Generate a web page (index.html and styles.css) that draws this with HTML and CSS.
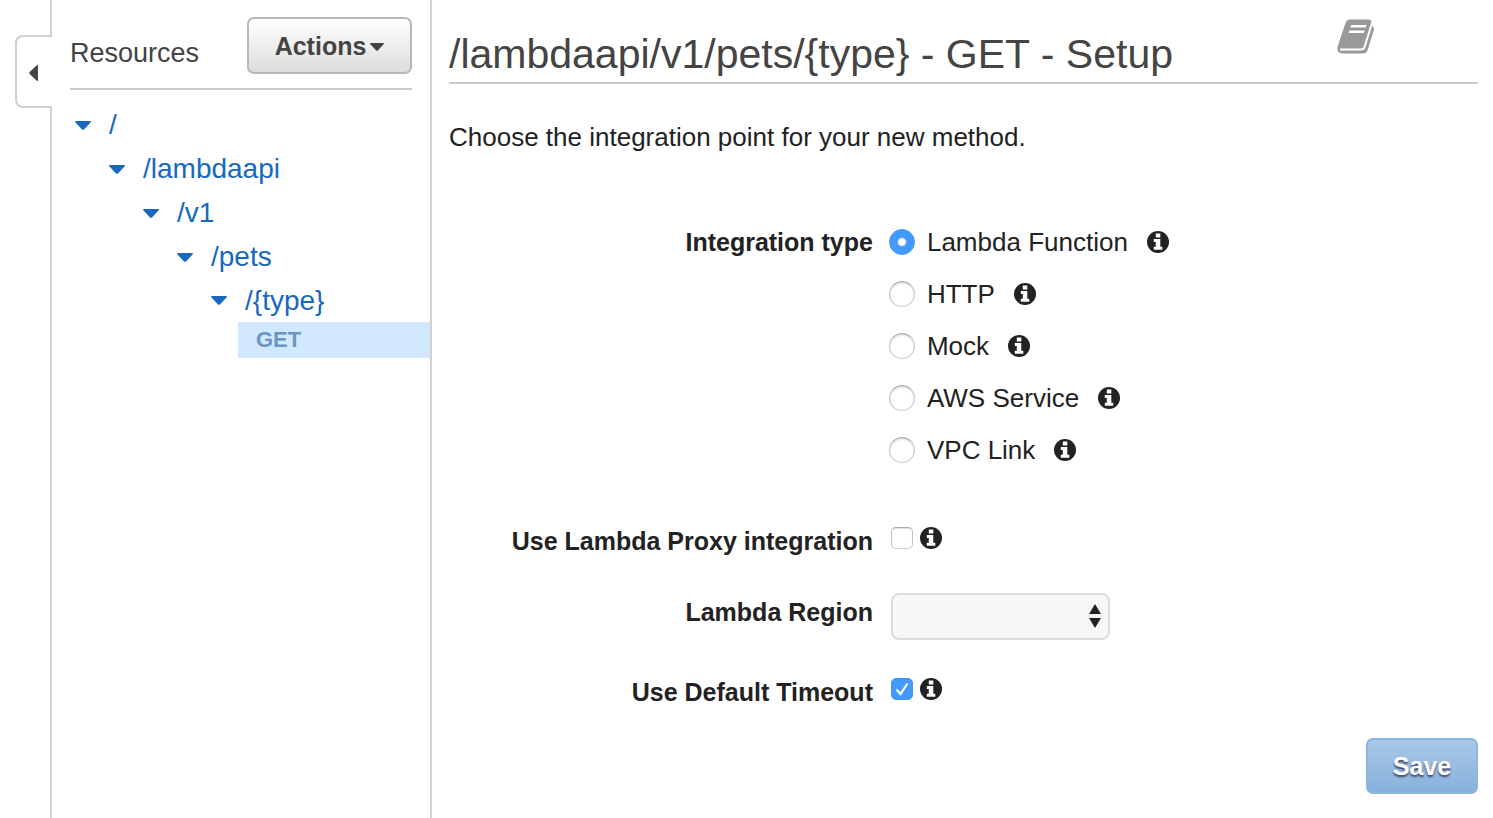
FILE: index.html
```html
<!DOCTYPE html>
<html lang="en">
<head>
<meta charset="utf-8">
<title>API Gateway - Method Setup</title>
<link rel="stylesheet" href="styles.css">
</head>
<body>
<svg class="sprite" aria-hidden="true">
  <symbol id="info" viewBox="0 0 22 22">
    <circle cx="11" cy="11" r="11" fill="#222"/>
    <path fill="#fff" d="M8.800 2.500h4.500v4H8.800zM6.800 8h6.500v7.800h2v3H6.800v-3h2V11h-2z"/>
  </symbol>
  <symbol id="caret" viewBox="0 0 16 9">
    <path fill="currentColor" d="M.5 0h15q.6.600 0 1.400L9 8.400q-1 .8-2 0L.5 1.400Q0 .6.500 0z"/>
  </symbol>
</svg>
<div class="app">
  <aside class="sidebar">
    <button class="handle" type="button" aria-label="Collapse resources">
      <svg class="handle-icon" viewBox="0 0 9 16"><path fill="#444" d="M9 0v16q-1 0-2-1L.6 9Q0 8 .6 7L7 1q1-1 2-1z"/></svg>
    </button>
    <header class="sidebar-head">
      <h2 class="sidebar-title">Resources</h2>
      <button class="actions" type="button">Actions<svg class="actions-caret" aria-hidden="true"><use href="#caret"/></svg></button>
    </header>
    <nav class="tree">
      <div class="node"><svg class="caret" aria-hidden="true"><use href="#caret"/></svg><a href="#root">/</a></div>
      <div class="branch">
        <div class="node"><svg class="caret" aria-hidden="true"><use href="#caret"/></svg><a href="#lambdaapi">/lambdaapi</a></div>
        <div class="branch">
          <div class="node"><svg class="caret" aria-hidden="true"><use href="#caret"/></svg><a href="#v1">/v1</a></div>
          <div class="branch">
            <div class="node"><svg class="caret" aria-hidden="true"><use href="#caret"/></svg><a href="#pets">/pets</a></div>
            <div class="branch">
              <div class="node"><svg class="caret" aria-hidden="true"><use href="#caret"/></svg><a href="#type">/{type}</a></div>
              <a class="method" href="#get">GET</a>
            </div>
          </div>
        </div>
      </div>
    </nav>
  </aside>
  <main class="main">
    <header class="main-head">
      <h1 class="title">/lambdaapi/v1/pets/{type} - GET - Setup</h1>
      <a class="docs" href="#docs" aria-label="Documentation">
        <svg class="docs-icon" viewBox="0 0 38 36">
          <path fill="#999" d="M13 .5h18q4 0 3.200 3.500v2.500q3.500 1 2.600 4.500L31 30q-1.200 4.500-5 4.500H6Q-.5 34.500.5 28L8.500 4Q9.500.5 13 .5z"/>
          <path fill="none" stroke="#fff" stroke-width="2" d="M3 30.500h21q2.800 0 3.600-2.800L35 4"/>
          <path fill="#fff" d="M14.200 6h15.300l-.8 2.500H13.400zM12.400 11.500h15.300l-.8 2.500H11.600z"/>
        </svg>
      </a>
    </header>
    <p class="intro">Choose the integration point for your new method.</p>
    <form class="form">
      <span class="label" id="type-label">Integration type</span>
      <div class="options" role="radiogroup" aria-labelledby="type-label">
        <div class="option"><label class="choice"><input class="radio" type="radio" name="type" checked>Lambda Function</label><svg class="info" aria-hidden="true"><use href="#info"/></svg></div>
        <div class="option"><label class="choice"><input class="radio" type="radio" name="type">HTTP</label><svg class="info" aria-hidden="true"><use href="#info"/></svg></div>
        <div class="option"><label class="choice"><input class="radio" type="radio" name="type">Mock</label><svg class="info" aria-hidden="true"><use href="#info"/></svg></div>
        <div class="option"><label class="choice"><input class="radio" type="radio" name="type">AWS Service</label><svg class="info" aria-hidden="true"><use href="#info"/></svg></div>
        <div class="option"><label class="choice"><input class="radio" type="radio" name="type">VPC Link</label><svg class="info" aria-hidden="true"><use href="#info"/></svg></div>
      </div>
      <label class="label" for="proxy">Use Lambda Proxy integration</label>
      <div class="check-row"><input class="check" type="checkbox" id="proxy"><svg class="info" aria-hidden="true"><use href="#info"/></svg></div>
      <label class="label label-select" for="region">Lambda Region</label>
      <div class="select-wrap">
        <select class="select" id="region"><option></option></select>
        <svg class="select-arrows" viewBox="0 0 12 24" aria-hidden="true"><path fill="#222" d="M6 0l6 10H0zM6 24l6-10H0z"/></svg>
      </div>
      <label class="label" for="timeout">Use Default Timeout</label>
      <div class="check-row"><input class="check" type="checkbox" id="timeout" checked><svg class="info" aria-hidden="true"><use href="#info"/></svg></div>
    </form>
    <footer class="footer"><button class="save" type="button">Save</button></footer>
  </main>
</div>
</body>
</html>
```
FILE: styles.css
```css
* {
  box-sizing: border-box;
}

body {
  margin: 0;
  background: #fff;
  color: #222;
  font-family: "Liberation Sans", Arial, sans-serif;
  font-size: 26px;
  line-height: 32px;
}

button,
select {
  font-family: inherit;
}

a {
  color: #1768bf;
  text-decoration: none;
}

.sprite {
  position: absolute;
  width: 0;
  height: 0;
}

.app {
  display: flex;
  min-height: 100vh;
  padding-left: 50px;
}

.sidebar {
  position: relative;
  flex: 0 0 382px;
  border: solid #d0d0d0;
  border-width: 0 2px;
}

/* Tab on the sidebar's outer edge; covers the border to open into the panel */
.handle {
  position: absolute;
  top: 35px;
  left: -37px;
  display: flex;
  align-items: center;
  width: 37px;
  height: 73px;
  padding: 2px 0 0 12px;
  border: 2px solid #d0d0d0;
  border-right: 0;
  border-radius: 8px 0 0 8px;
  background: #fff;
}

.handle-icon {
  width: 9px;
  height: 16px;
}

.sidebar-head {
  display: flex;
  justify-content: space-between;
  margin: 0 18px;
  padding: 17px 0 14px;
  border-bottom: 2px solid #ccc;
}

.sidebar-title {
  margin: 0;
  padding-top: 20px;
  color: #444;
  font-size: 27px;
  font-weight: normal;
}

.actions {
  display: flex;
  align-items: center;
  justify-content: center;
  gap: 4px;
  width: 165px;
  height: 57px;
  padding: 2px 0 0;
  border: 2px solid #b8b8b8;
  border-radius: 7px;
  background: linear-gradient(#fff, #ddd);
  color: #444;
  font-size: 25px;
  font-weight: bold;
}

.actions-caret {
  width: 14px;
  height: 8px;
}

.tree {
  padding: 13px 0 0 23px;
  font-size: 28px;
}

.branch {
  padding-left: 34px;
}

.node {
  display: flex;
  align-items: center;
  gap: 18px;
  height: 44px;
  color: #1768bf;
}

.node:last-of-type {
  height: 43px;
}

.caret {
  width: 16px;
  height: 9px;
}

.method {
  display: block;
  margin-left: 27px;
  padding-left: 18px;
  background: #d1e8ff;
  color: #6996c3;
  font-size: 22px;
  font-weight: bold;
  line-height: 36px;
}

.main {
  flex: 1;
  padding: 0 15px 24px 17px;
}

.main-head {
  display: flex;
  align-items: flex-start;
  justify-content: space-between;
  height: 84px;
  padding: 19px 103px 0 0;
  border-bottom: 2px solid #ccc;
}

.title {
  margin: 0;
  padding-top: 11px;
  color: #444;
  font-size: 41px;
  font-weight: normal;
  line-height: 48px;
}

.docs-icon {
  display: block;
  width: 38px;
  height: 36px;
}

.intro {
  margin: 37px 0 73px;
}

.form {
  display: grid;
  grid-template-columns: 13fr 18fr;
  column-gap: 18px;
}

.label {
  font-size: 25px;
  font-weight: bold;
  text-align: right;
}

.label-select {
  padding-top: 39px;
}

.options {
  display: grid;
  gap: 20px;
  margin-bottom: 59px;
}

.option {
  display: flex;
  align-items: center;
  gap: 19px;
}

.choice {
  display: flex;
  align-items: center;
  gap: 12px;
}

.radio,
.check {
  flex: none;
  appearance: none;
  margin: 0;
  border: 1px solid;
  border-color: #aaa #c4c4c4 #ccc;
  background: #fff center / contain no-repeat;
}

.radio {
  width: 26px;
  height: 26px;
  margin-left: -2px;
  border-radius: 50%;
  box-shadow: inset 0 1px 2px #ccc;
}

.radio:checked {
  border-color: #3f97f8;
  background: radial-gradient(circle, #fff 3px, #429bfb 5px);
  box-shadow: none;
}

.check {
  width: 22px;
  height: 22px;
  border-radius: 5px;
  box-shadow: inset 0 1px 1px #ddd;
}

.check:checked {
  border-color: #3f97f8;
  background-color: #429bfb;
  background-image: url("data:image/svg+xml,%3Csvg xmlns='http://www.w3.org/2000/svg' viewBox='0 0 20 20'%3E%3Cpath d='M4.500 10.500l4 4.500L15.500 4.500' fill='none' stroke='white' stroke-width='2.200'/%3E%3C/svg%3E");
  box-shadow: none;
}

.info {
  flex: none;
  width: 22px;
  height: 22px;
}

.check-row {
  display: flex;
  align-items: center;
  gap: 7px;
  height: 26px;
}

.select-wrap {
  position: relative;
  width: 219px;
  margin: 36px 0;
}

.select {
  display: block;
  appearance: none;
  width: 100%;
  height: 47px;
  border: 2px solid #ddd;
  border-radius: 8px;
  background: #f7f7f7;
}

.select-arrows {
  position: absolute;
  top: 11px;
  right: 9px;
  width: 12px;
  height: 24px;
  pointer-events: none;
}

.footer {
  display: flex;
  justify-content: flex-end;
  padding-top: 30px;
}

.save {
  width: 112px;
  height: 56px;
  border: 2px solid #8cb5df;
  border-radius: 7px;
  background: linear-gradient(#a9c8e6, #87b1dc);
  color: #fff;
  font-size: 25px;
  font-weight: bold;
  text-shadow: 0 2px 2px #446;
}
```
